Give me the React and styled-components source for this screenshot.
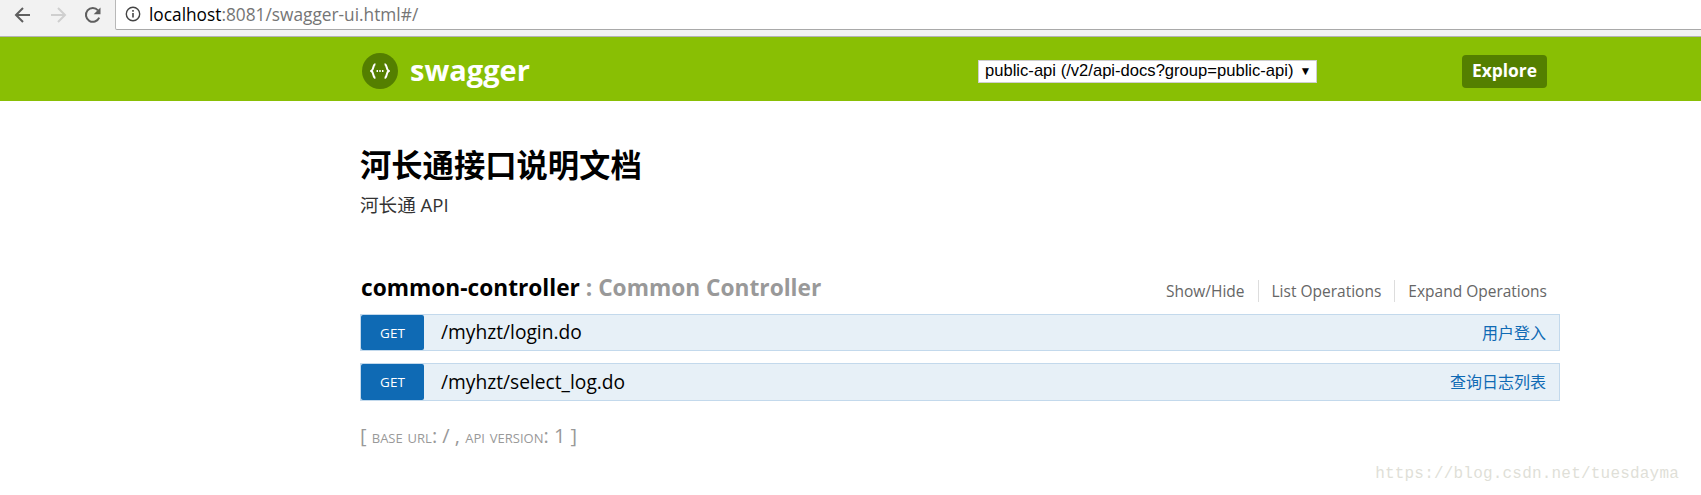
import React from 'react';
import styled, { createGlobalStyle } from 'styled-components';

const sans = `"Open Sans", "Noto Sans CJK SC", sans-serif`;

const GlobalStyle = createGlobalStyle`
	html, body {
		margin: 0;
		padding: 0;
		background: #fff;
		font-family: ${sans};
	}
`;

const Page = styled.div`
	position: relative;
	width: 1701px;
	height: 495px;
	overflow: hidden;
`;

const BrowserBar = styled.div`
	display: flex;
	height: 36px;
	background: #f2f2f2;
	border-bottom: 1px solid #b4b4b4;
`;

const NavIcons = styled.div`
	display: flex;
	align-items: center;
	gap: 15px;
	width: 115px;
	height: 30px;
	padding-left: 13px;
	box-sizing: border-box;
`;

const AddressField = styled.div`
	flex: 1;
	display: flex;
	align-items: center;
	gap: 8px;
	height: 30px;
	padding: 0 0 1px 9px;
	box-sizing: border-box;
	background: #fff;
	border-left: 1px solid #b8b8b8;
	border-bottom: 1px solid #a9a9a9;
	border-bottom-left-radius: 2px;
	font-size: 17.3px;
	color: #757575;
`;

const Host = styled.span`
	color: #000;
`;

const Header = styled.header`
	height: 64px;
	background: #89bf04;
`;

const Wrap = styled.div`
	position: relative;
	width: 1200px;
	margin: 0 0 0 360px;
`;

const HeaderRow = styled(Wrap)`
	display: flex;
	align-items: center;
	height: 64px;
	padding-top: 4px;
	box-sizing: border-box;
`;

const Brand = styled.div`
	display: flex;
	align-items: center;
	gap: 12px;
	margin-left: 2px;
	width: 616px;
	font-size: 29px;
	font-weight: 700;
	color: #fff;
`;

const BrandName = styled.span`
	padding-bottom: 3px;
`;

const LogoDisc = styled.div`
	display: flex;
	align-items: center;
	justify-content: center;
	width: 36px;
	height: 36px;
	border-radius: 50%;
	background: #547f00;
`;

const SpecSelect = styled.div`
	display: flex;
	align-items: center;
	gap: 6px;
	width: 339px;
	height: 23px;
	padding: 0 6px;
	box-sizing: border-box;
	white-space: nowrap;
	background: #fff;
	border: 1px solid #cfcfcf;
	font-family: "Liberation Sans", sans-serif;
	font-size: 16.6px;
	color: #000;
`;

const Caret = styled.span`
	font-size: 12px;
`;

const ExploreButton = styled.div`
	margin-left: 145px;
	width: 85px;
	height: 33px;
	line-height: 31px;
	text-align: center;
	border-radius: 4px;
	background: #547f00;
	color: #fff;
	font-size: 17.4px;
	font-weight: 700;
`;

const InfoBlock = styled.div`
	padding-top: 44px;
`;

const Title = styled.h1`
	margin: 0;
	font-size: 31.3px;
	line-height: 40px;
	font-weight: 700;
	color: #000;
`;

const Subtitle = styled.p`
	margin: 7px 0 0;
	font-size: 18.6px;
	line-height: 26px;
	color: #333;
`;

const ResourceHead = styled.div`
	display: flex;
	align-items: center;
	justify-content: space-between;
	height: 34px;
	margin-top: 52px;
`;

const ResourceName = styled.h2`
	margin: 0 0 0 1px;
	font-size: 22.7px;
	font-weight: 700;
	color: #000;
`;

const ResourceHint = styled.span`
	color: #999;
`;

const ResourceLinks = styled.div`
	display: flex;
	margin: 7px 0 0;
	padding-right: 13px;
`;

const ResourceLink = styled.span`
	padding: 0 13px;
	border-right: 1px solid #ddd;
	font-size: 15.5px;
	line-height: 22px;
	color: #666;

	&:last-child {
		padding-right: 0;
		border-right: 0;
	}
`;

const Operation = styled.div`
	display: flex;
	align-items: center;
	height: ${(p) => p.$height}px;
	margin-top: ${(p) => p.$gap}px;
	box-sizing: border-box;
	padding: 0 13px 0 0;
	background: #e7f0f7;
	border: 1px solid #c3d9ec;
`;

const Method = styled.span`
	align-self: stretch;
	width: 63px;
	margin: 0 17px 0 0;
	display: flex;
	align-items: center;
	justify-content: center;
	border-radius: 2px;
	background: #0f6ab4;
	color: #fff;
	font-size: 13.5px;
`;

const OpPath = styled.span`
	flex: 1;
	padding-bottom: 2px;
	font-size: 19.2px;
	color: #000;
`;

const OpSummary = styled.span`
	padding-bottom: 2px;
	font-size: 16px;
	color: #0f6ab4;
`;

const ApiVersion = styled.div`
	margin: 23px 0 0 0;
	font-size: 20px;
	line-height: 24px;
	color: #999;
`;

const SmallCaps = styled.span`
	font-variant: small-caps;
	font-size: 18.8px;
`;

const Watermark = styled.div`
	position: absolute;
	right: 22px;
	bottom: 12px;
	font-family: "Liberation Mono", "DejaVu Sans Mono", monospace;
	font-size: 16px;
	letter-spacing: 0.2px;
	color: #dfdfd8;
`;

const BackIcon = ({ color }) => (
	<svg width="20" height="20" viewBox="0 0 20 20" fill="none" stroke={color} strokeWidth="2">
		<path d="M17 10H3.5M10 3l-7 7 7 7" />
	</svg>
);

const ForwardIcon = ({ color }) => (
	<svg width="20" height="20" viewBox="0 0 20 20" fill="none" stroke={color} strokeWidth="2">
		<path d="M3 10h13.5M10 3l7 7-7 7" />
	</svg>
);

const ReloadIcon = () => (
	<svg width="20" height="20" viewBox="0 0 20 20" fill="none">
		<path d="M16.2 12.6A6.9 6.9 0 1 1 15 5.3" stroke="#5f5f5f" strokeWidth="2" />
		<path d="M17.5 2.5v6.8h-6.8z" fill="#5f5f5f" />
	</svg>
);

const InfoIcon = () => (
	<svg width="16" height="16" viewBox="0 0 16 16" fill="none">
		<circle cx="8" cy="8" r="6.7" stroke="#444" strokeWidth="1.4" />
		<path d="M8 7v4.6" stroke="#444" strokeWidth="1.6" />
		<path d="M8 4.1v1.6" stroke="#444" strokeWidth="1.6" />
	</svg>
);

const SwaggerMark = () => (
	<svg width="20" height="18" viewBox="0 0 22 18" fill="none" stroke="#fff" strokeWidth="2.2">
		<path d="M6 1.5C3 1.5 4.4 7.8 1.5 9c2.9 1.2 1.5 7.5 4.5 7.5" />
		<path d="M16 1.5c3 0 1.6 6.3 4.5 7.5-2.9 1.2-1.5 7.5-4.5 7.5" />
		<path d="M7.2 9h1.6M10.2 9h1.6M13.2 9h1.6" />
	</svg>
);

const operations = [
	{ path: '/myhzt/login.do', summary: '用户登入', height: 37, gap: 10 },
	{ path: '/myhzt/select_log.do', summary: '查询日志列表', height: 38, gap: 12 },
];

const App = () => {
	return (
		<Page>
			<GlobalStyle />
			<BrowserBar>
				<NavIcons>
					<BackIcon color="#5f5f5f" />
					<ForwardIcon color="#cfcfcf" />
					<ReloadIcon />
				</NavIcons>
				<AddressField>
					<InfoIcon />
					<span>
						<Host>localhost</Host>:8081/swagger-ui.html#/
					</span>
				</AddressField>
			</BrowserBar>

			<Header>
				<HeaderRow>
					<Brand>
						<LogoDisc>
							<SwaggerMark />
						</LogoDisc>
						<BrandName>swagger</BrandName>
					</Brand>
					<SpecSelect>
						public-api (/v2/api-docs?group=public-api)
						<Caret>▼</Caret>
					</SpecSelect>
					<ExploreButton>Explore</ExploreButton>
				</HeaderRow>
			</Header>

			<Wrap>
				<InfoBlock>
					<Title>河长通接口说明文档</Title>
					<Subtitle>河长通 API</Subtitle>
				</InfoBlock>

				<ResourceHead>
					<ResourceName>
						common-controller <ResourceHint>: Common Controller</ResourceHint>
					</ResourceName>
					<ResourceLinks>
						<ResourceLink>Show/Hide</ResourceLink>
						<ResourceLink>List Operations</ResourceLink>
						<ResourceLink>Expand Operations</ResourceLink>
					</ResourceLinks>
				</ResourceHead>

				{operations.map((op) => (
					<Operation key={op.path} $height={op.height} $gap={op.gap}>
						<Method>GET</Method>
						<OpPath>{op.path}</OpPath>
						<OpSummary>{op.summary}</OpSummary>
					</Operation>
				))}

				<ApiVersion>
					[ <SmallCaps>base url</SmallCaps>: / , <SmallCaps>api version</SmallCaps>: 1 ]
				</ApiVersion>
			</Wrap>

			<Watermark>https://blog.csdn.net/tuesdayma</Watermark>
		</Page>
	);
};

export default App;
